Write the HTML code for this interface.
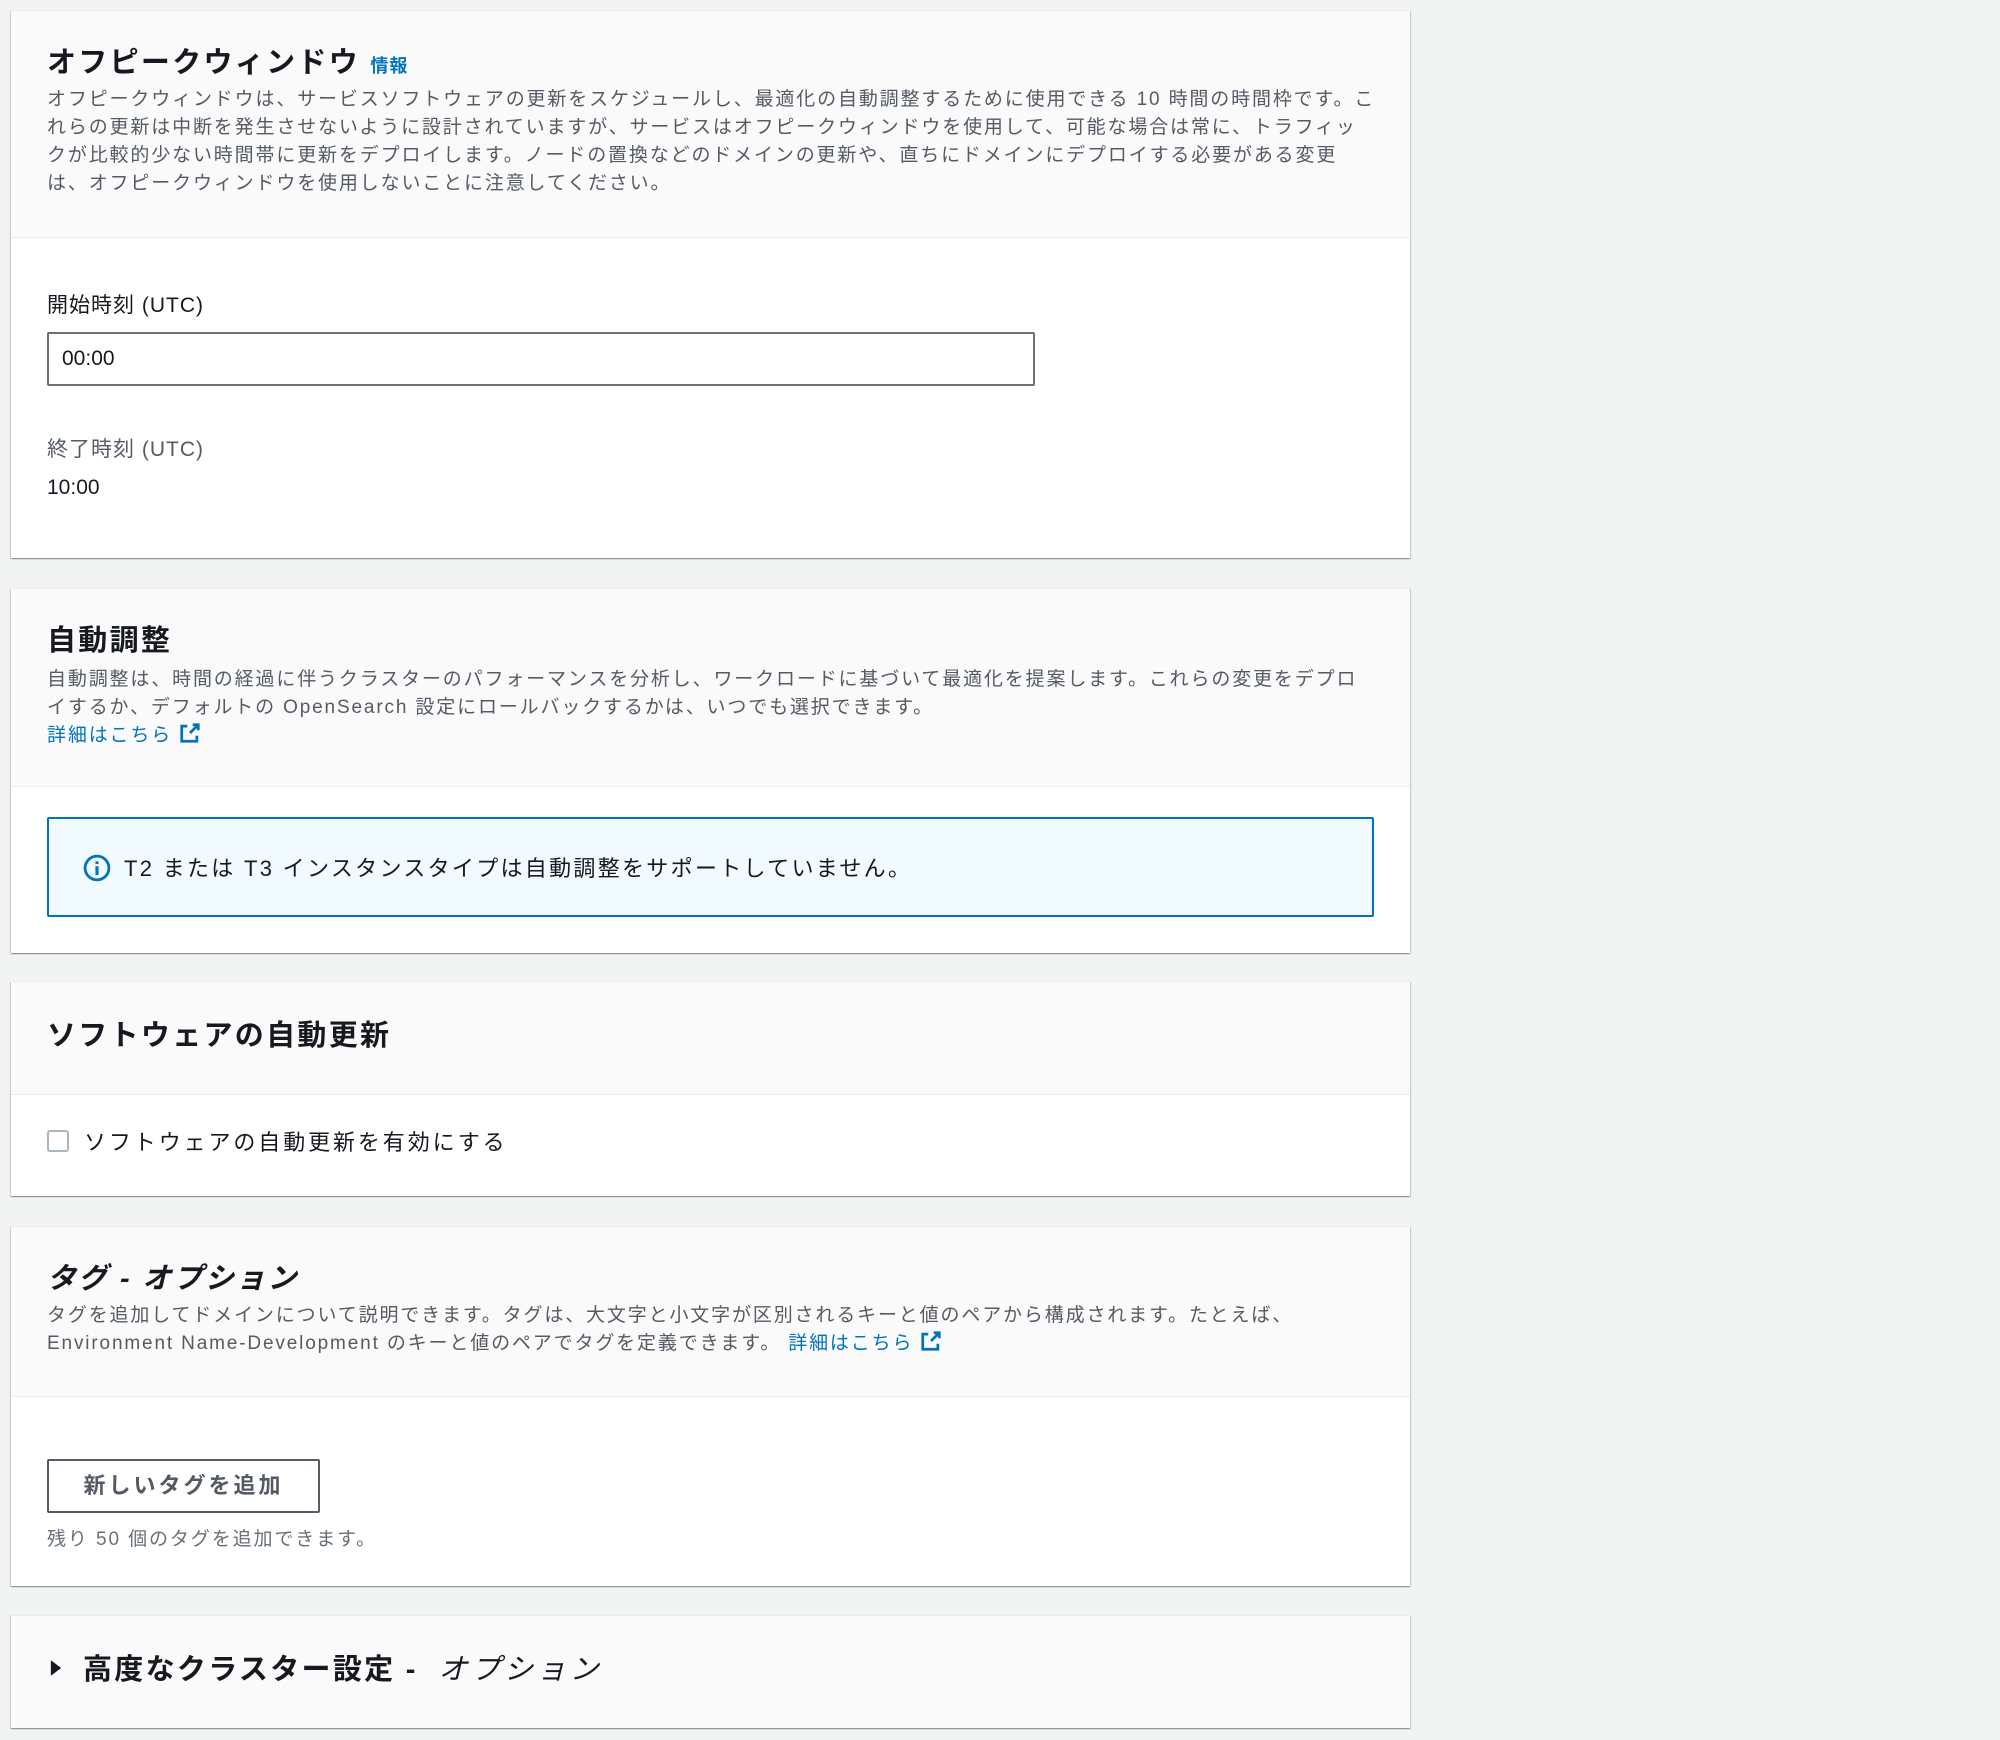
<!DOCTYPE html>
<html><head><meta charset="utf-8"><style>
body{margin:0;width:2000px;height:1740px;background:#f2f3f3;font-family:"Liberation Sans","Noto Sans CJK JP",sans-serif;color:#16191f;position:relative;overflow:hidden;letter-spacing:2px}
.card{position:absolute;left:11px;width:1399px;background:#fff;box-shadow:0 1px 1px 0 rgba(0,28,36,.3),1px 1px 1px 0 rgba(0,28,36,.15),-1px 1px 1px 0 rgba(0,28,36,.15);border-top:1px solid #eaeded}
.hd{position:absolute;left:0;top:0;width:100%;background:#fafafa;border-bottom:1px solid #eaeded}
.a{position:absolute;white-space:nowrap}
.t{font-size:29px;font-weight:bold;left:36px;letter-spacing:2.3px}
.d{font-size:19px;color:#545b64;line-height:28px;left:36px;letter-spacing:1.85px}
.lnk{color:#0073bb}
.lbl{font-size:21px;color:#16191f;left:36px;letter-spacing:1px}
</style></head><body>

<div class="card" style="top:10px;height:547px">
 <div class="hd" style="height:226px"></div>
 <div class="a t" style="top:28px">オフピークウィンドウ <span class="lnk" style="font-size:18px;letter-spacing:1px">情報</span></div>
 <div class="a d" style="top:75px">オフピークウィンドウは、サービスソフトウェアの更新をスケジュールし、最適化の自動調整するために使用できる 10 時間の時間枠です。こ<br>れらの更新は中断を発生させないように設計されていますが、サービスはオフピークウィンドウを使用して、可能な場合は常に、トラフィッ<br>クが比較的少ない時間帯に更新をデプロイします。ノードの置換などのドメインの更新や、直ちにドメインにデプロイする必要がある変更<br>は、オフピークウィンドウを使用しないことに注意してください。</div>
 <div class="a lbl" style="top:278px">開始時刻 (UTC)</div>
 <div class="a" style="left:36px;top:321px;height:50px;border:2px solid #687078;border-radius:2px;font-size:21px;line-height:50px;padding-left:13px;width:971px;letter-spacing:0">00:00</div>
 <div class="a lbl" style="top:422px;color:#545b64">終了時刻 (UTC)</div>
 <div class="a lbl" style="top:465px;letter-spacing:0">10:00</div>
</div>

<div class="card" style="top:588px;height:364px">
 <div class="hd" style="height:197px"></div>
 <div class="a t" style="top:28px">自動調整</div>
 <div class="a d" style="top:77px">自動調整は、時間の経過に伴うクラスターのパフォーマンスを分析し、ワークロードに基づいて最適化を提案します。これらの変更をデプロ<br>イするか、デフォルトの OpenSearch 設定にロールバックするかは、いつでも選択できます。<br><span class="lnk">詳細はこちら <svg width="22" height="22" viewBox="0 0 16 16" style="vertical-align:-3px"><path d="M10 2h4v4M14 2L8 8M6 3H2v11h11v-4" fill="none" stroke="#0073bb" stroke-width="2"/></svg></span></div>
 <div class="a" style="left:36px;top:228px;width:1323px;height:96px;background:#f1faff;border:2px solid #0073bb;border-radius:2px"></div>
 <svg class="a" style="left:72px;top:265px" width="28" height="28" viewBox="0 0 16 16"><circle cx="8" cy="8" r="6.8" fill="none" stroke="#0073bb" stroke-width="1.6"/><path d="M8 7v5M8 4.2v1.6" stroke="#0073bb" stroke-width="1.8"/></svg>
 <div class="a" style="left:113px;top:262px;font-size:22px;letter-spacing:2.3px">T2 または T3 インスタンスタイプは自動調整をサポートしていません。</div>
</div>

<div class="card" style="top:981px;height:214px">
 <div class="hd" style="height:112px"></div>
 <div class="a t" style="top:30px">ソフトウェアの自動更新</div>
 <div class="a" style="left:36px;top:148px;width:22px;height:22px;border:2px solid #aab7b8;border-radius:3px;box-sizing:border-box"></div>
 <div class="a" style="left:73px;top:143px;font-size:22px;letter-spacing:2.9px">ソフトウェアの自動更新を有効にする</div>
</div>

<div class="card" style="top:1226px;height:359px">
 <div class="hd" style="height:169px"></div>
 <div class="a t" style="top:28px;font-style:italic">タグ - オプション</div>
 <div class="a d" style="top:75px">タグを追加してドメインについて説明できます。タグは、大文字と小文字が区別されるキーと値のペアから構成されます。たとえば、<br>Environment Name-Development のキーと値のペアでタグを定義できます。 <span class="lnk">詳細はこちら <svg width="22" height="22" viewBox="0 0 16 16" style="vertical-align:-3px"><path d="M10 2h4v4M14 2L8 8M6 3H2v11h11v-4" fill="none" stroke="#0073bb" stroke-width="2"/></svg></span></div>
 <div class="a" style="left:36px;top:232px;width:273px;height:54px;border:2px solid #545b64;border-radius:2px;box-sizing:border-box;font-size:22px;font-weight:bold;color:#545b64;text-align:center;line-height:50px;letter-spacing:3px">新しいタグを追加</div>
 <div class="a" style="left:36px;top:297px;font-size:19px;color:#687078;letter-spacing:1.9px">残り 50 個のタグを追加できます。</div>
</div>

<div class="card" style="top:1615px;height:112px;background:#fafafa">
 <svg class="a" style="left:38px;top:43px" width="14" height="18" viewBox="0 0 10 14"><path d="M1 1l8 6-8 6z" fill="#16191f"/></svg>
 <div class="a" style="left:72px;top:30px;font-size:29px;font-weight:bold;letter-spacing:2.3px">高度なクラスター設定 - &nbsp;<span style="font-weight:normal;font-style:italic;letter-spacing:3.8px">オプション</span></div>
</div>

</body></html>
